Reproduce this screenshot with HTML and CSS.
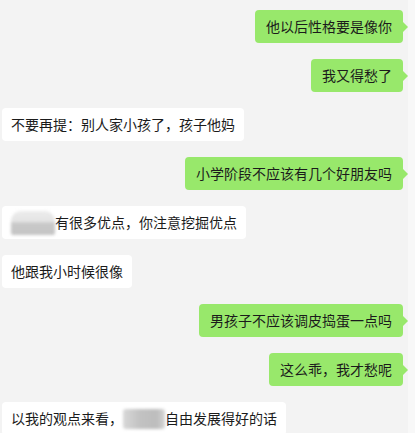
FILE: index.html
```html
<!DOCTYPE html>
<html lang="zh">
<head>
<meta charset="utf-8">
<link rel="stylesheet" href="styles.css">
</head>
<body>
<div class="page">
  <div class="chat">
    <div class="row me"><div class="bubble green">他以后性格要是像你</div></div>
    <div class="row me"><div class="bubble green">我又得愁了</div></div>
    <div class="row other"><div class="bubble white">不要再提：别人家小孩了，孩子他妈</div></div>
    <div class="row me"><div class="bubble green">小学阶段不应该有几个好朋友吗</div></div>
    <div class="row other"><div class="bubble white"><span class="blur blur-a"></span>有很多优点，你注意挖掘优点</div></div>
    <div class="row other"><div class="bubble white">他跟我小时候很像</div></div>
    <div class="row me"><div class="bubble green">男孩子不应该调皮捣蛋一点吗</div></div>
    <div class="row me"><div class="bubble green">这么乖，我才愁呢</div></div>
    <div class="row other"><div class="bubble white">以我的观点来看，<span class="blur blur-b"></span>自由发展得好的话</div></div>
  </div>
  <div class="strip"></div>
</div>
</body>
</html>
```

FILE: styles.css
```css
html, body {
  margin: 0;
  padding: 0;
  background: #f3f3f3;
}
body {
  width: 415px;
  height: 433px;
  overflow: hidden;
  font-family: "Noto Sans CJK SC", "Noto Sans", sans-serif;
  font-size: 14px;
  color: #1b1b1b;
}
.page {
  display: flex;
  height: 433px;
}
.chat {
  width: 408px;
  display: flex;
  flex-direction: column;
  gap: 16px;
  padding-top: 10px;
}
.strip {
  width: 7px;
  background: #f8f8f8;
}
.row {
  display: flex;
}
.row.me {
  justify-content: flex-end;
  padding-right: 5px;
}
.row.other {
  justify-content: flex-start;
  padding-left: 2px;
}
.bubble {
  position: relative;
  height: 33px;
  line-height: 33px;
  border-radius: 4px;
  white-space: nowrap;
  display: flex;
  align-items: center;
}
.green {
  background: #98e86b;
  padding: 0 11px;
}
.green::after {
  content: "";
  position: absolute;
  right: -5px;
  top: 12px;
  border-top: 5px solid transparent;
  border-bottom: 5px solid transparent;
  border-left: 5px solid #98e86b;
}
.white {
  background: #ffffff;
  padding: 0 9px;
}
.blur {
  display: inline-block;
  height: 24px;
  filter: blur(1.5px);
}
.blur-a {
  width: 44px;
  border-radius: 10px 10px 2px 2px;
  background: linear-gradient(#ececec 0%, #e4e4e4 45%, #c9c9c9 50%, #c4c4c4 100%);
}
.blur-b {
  width: 42px;
  height: 20px;
  background: linear-gradient(90deg, #d8d8d8, #c2c2c2 40%, #bdbdbd 80%, #d5d5d5);
  border-radius: 3px;
}
```
